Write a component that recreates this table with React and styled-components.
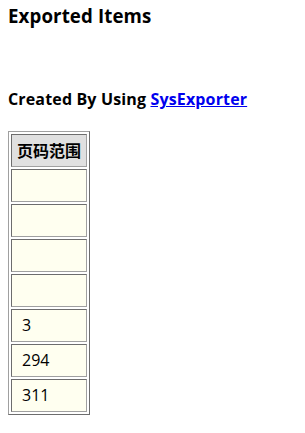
import React from "react";
import styled, { createGlobalStyle } from "styled-components";

const GlobalStyle = createGlobalStyle`
  body {
    margin: 0;
    padding: 8px;
    background: #fff;
    font-family: "Open Sans", "Noto Sans CJK SC", sans-serif;
    color: #000;
  }
`;

const Title = styled.h3`
  font-size: 18.7px;
  font-weight: 700;
  margin: -2px 0 0;
  line-height: 20px;
  letter-spacing: 0.1px;
`;

const Credit = styled.h4`
  font-size: 16px;
  font-weight: 700;
  margin: 62px 0 0;
  line-height: 22px;
  letter-spacing: 0.15px;

  a {
    color: #0000ee;
    text-decoration: underline;
  }
`;

const Table = styled.table`
  margin-top: 21px;
  border: 1px solid;
  border-color: #a0a0a0 #6d6d6d #6d6d6d #a0a0a0;
  border-spacing: 2px;
`;

const Th = styled.th`
  background: #e0e0e0;
  border: 1px solid;
  border-color: #6d6d6d #a0a0a0 #a0a0a0 #6d6d6d;
  padding: 5px;
  font-size: 16px;
  font-weight: 700;
  line-height: 21px;
  font-family: "Noto Sans CJK SC", sans-serif;
  white-space: nowrap;
`;

const Td = styled.td`
  background: #fffff0;
  border: 1px solid;
  border-color: #6d6d6d #a0a0a0 #a0a0a0 #6d6d6d;
  padding: 5px 5px 5px 10px;
  font-size: 16px;
  line-height: 21px;
  height: 21px;
  white-space: nowrap;
`;

const rows = ["", "", "", "", "3", "294", "311"];

export default function App() {
  return (
    <>
      <GlobalStyle />
      <Title>Exported Items</Title>
      <Credit>
        Created By Using <a href="#">SysExporter</a>
      </Credit>
      <Table>
        <thead>
          <tr>
            <Th>页码范围</Th>
          </tr>
        </thead>
        <tbody>
          {rows.map((r, i) => (
            <tr key={i}>
              <Td>{r || "\u00a0"}</Td>
            </tr>
          ))}
        </tbody>
      </Table>
    </>
  );
}
